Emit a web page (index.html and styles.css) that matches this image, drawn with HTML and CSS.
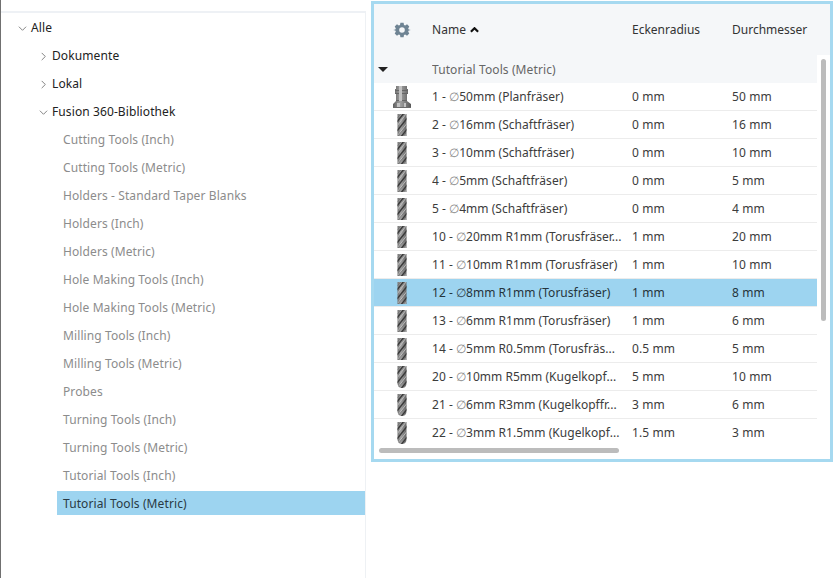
FILE: index.html
```html
<!DOCTYPE html>
<html>
<head>
  <title>Werkzeugbibliothek</title>
  <link rel="stylesheet" href="styles.css">
</head>
<body>

  <!-- shared tool thumbnails -->
  <svg class="defs" width="0" height="0">
    <defs>
      <linearGradient id="steel" x1="0" x2="1" y1="0" y2="0">
        <stop offset="0" stop-color="#5f5f5f"/>
        <stop offset="0.4" stop-color="#a0a0a0"/>
        <stop offset="1" stop-color="#575757"/>
      </linearGradient>
      <symbol id="flutes" viewBox="0 0 12 24">
        <g fill="none" stroke-width="1">
          <path d="M1 9l7-9M1 18l11-14M4 25l8-10" stroke="#3a3a3a" stroke-width="1.400"/>
          <path d="M1 13l9-12M2 22l10-13M8 24l4-5" stroke="#c9c9c9" stroke-width=".8"/>
          <path d="M1 5l4-4M1 24l11-13" stroke="#6d6d6d" stroke-width=".6"/>
        </g>
      </symbol>
      <clipPath id="mill-clip"><path d="M1.500 1h9v22h-9z"/></clipPath>
      <clipPath id="ball-clip"><path d="M1.500 1h9v17c0 3-1.500 5-4.500 5s-4.500-2-4.500-5z"/></clipPath>
      <symbol id="mill" viewBox="0 0 12 24">
        <g clip-path="url(#mill-clip)">
          <path d="M0 0h12v24H0z" fill="url(#steel)"/>
          <use href="#flutes" width="12" height="24"/>
        </g>
      </symbol>
      <symbol id="ball" viewBox="0 0 12 24">
        <g clip-path="url(#ball-clip)">
          <path d="M0 0h12v24H0z" fill="url(#steel)"/>
          <use href="#flutes" width="12" height="24"/>
        </g>
      </symbol>
      <symbol id="face" viewBox="0 0 20 24">
        <path d="M4 1h11v3h1v5h-1v7l4 3v4H1v-4l3-3V9H3V4h1z" fill="url(#steel)"/>
        <path d="M3 5h13v1H3zM3 8h13v1H3zM4 15h11v1H4z" fill="#666"/>
        <path d="M7 1h3v15H7zM5 18h3v5H5zM12 18h2v5h-2z" fill="#c2c2c2"/>
        <path d="M1 22h18v1H1z" fill="#6a6a6a"/>
      </symbol>
    </defs>
  </svg>

  <div class="app">

    <div class="tree-pane">
      <ul class="tree">
        <li class="node"><svg class="chev" viewBox="0 0 10 10"><path d="M1 3l4 4 4-4"/></svg>Alle</li>
        <li class="node lvl-1"><svg class="chev" viewBox="0 0 10 10"><path d="M3 1l4 4-4 4"/></svg>Dokumente</li>
        <li class="node lvl-1"><svg class="chev" viewBox="0 0 10 10"><path d="M3 1l4 4-4 4"/></svg>Lokal</li>
        <li class="node lvl-1"><svg class="chev" viewBox="0 0 10 10"><path d="M1 3l4 4 4-4"/></svg>Fusion 360-Bibliothek</li>
        <li class="leaf">Cutting Tools (Inch)</li>
        <li class="leaf">Cutting Tools (Metric)</li>
        <li class="leaf">Holders - Standard Taper Blanks</li>
        <li class="leaf">Holders (Inch)</li>
        <li class="leaf">Holders (Metric)</li>
        <li class="leaf">Hole Making Tools (Inch)</li>
        <li class="leaf">Hole Making Tools (Metric)</li>
        <li class="leaf">Milling Tools (Inch)</li>
        <li class="leaf">Milling Tools (Metric)</li>
        <li class="leaf">Probes</li>
        <li class="leaf">Turning Tools (Inch)</li>
        <li class="leaf">Turning Tools (Metric)</li>
        <li class="leaf">Tutorial Tools (Inch)</li>
        <li class="leaf selected">Tutorial Tools (Metric)</li>
      </ul>
    </div>

    <div class="table-panel">
      <div class="row head">
        <span class="thumb">
          <svg class="gear" viewBox="0 0 20 20"><path fill-rule="evenodd" d="M8 1h4l.5 2.600 1.500.7 2.300-1.400 2.800 2.800-1.400 2.300.7 1.500 2.600.5v0l-2.600.5-.7 1.500 1.400 2.300-2.800 2.800-2.300-1.400-1.500.7L12 19H8l-.5-2.600-1.500-.7-2.300 1.400-2.800-2.800 1.400-2.300-.7-1.500L-1 10v0l2.600-.5.7-1.500-1.400-2.300 2.800-2.800L6 4.300l1.500-.7zM10 6.500a3.500 3.500 0 1 0 0 7 3.500 3.500 0 0 0 0-7z"/></svg>
        </span>
        <span class="name">Name <svg class="sort" viewBox="0 0 10 6"><path d="M1 5l4-4 4 4"/></svg></span>
        <span>Eckenradius</span>
        <span>Durchmesser</span>
      </div>

      <div class="row group">
        <span class="thumb"><i class="caret"></i></span>
        <span class="name">Tutorial Tools (Metric)</span>
      </div>

      <div class="row"><span class="thumb"><svg class="tool wide"><use href="#face"/></svg></span><span class="name">1 - <i>∅</i>50mm (Planfräser)</span><span>0 mm</span><span>50 mm</span></div>
      <div class="row"><span class="thumb"><svg class="tool"><use href="#mill"/></svg></span><span class="name">2 - <i>∅</i>16mm (Schaftfräser)</span><span>0 mm</span><span>16 mm</span></div>
      <div class="row"><span class="thumb"><svg class="tool"><use href="#mill"/></svg></span><span class="name">3 - <i>∅</i>10mm (Schaftfräser)</span><span>0 mm</span><span>10 mm</span></div>
      <div class="row"><span class="thumb"><svg class="tool"><use href="#mill"/></svg></span><span class="name">4 - <i>∅</i>5mm (Schaftfräser)</span><span>0 mm</span><span>5 mm</span></div>
      <div class="row"><span class="thumb"><svg class="tool"><use href="#mill"/></svg></span><span class="name">5 - <i>∅</i>4mm (Schaftfräser)</span><span>0 mm</span><span>4 mm</span></div>
      <div class="row"><span class="thumb"><svg class="tool"><use href="#mill"/></svg></span><span class="name">10 - <i>∅</i>20mm R1mm (Torusfräser...</span><span>1 mm</span><span>20 mm</span></div>
      <div class="row"><span class="thumb"><svg class="tool"><use href="#mill"/></svg></span><span class="name">11 - <i>∅</i>10mm R1mm (Torusfräser)</span><span>1 mm</span><span>10 mm</span></div>
      <div class="row current"><span class="thumb"><svg class="tool"><use href="#mill"/></svg></span><span class="name">12 - <i>∅</i>8mm R1mm (Torusfräser)</span><span>1 mm</span><span>8 mm</span></div>
      <div class="row"><span class="thumb"><svg class="tool"><use href="#mill"/></svg></span><span class="name">13 - <i>∅</i>6mm R1mm (Torusfräser)</span><span>1 mm</span><span>6 mm</span></div>
      <div class="row"><span class="thumb"><svg class="tool"><use href="#mill"/></svg></span><span class="name">14 - <i>∅</i>5mm R0.5mm (Torusfräs...</span><span>0.5 mm</span><span>5 mm</span></div>
      <div class="row"><span class="thumb"><svg class="tool"><use href="#ball"/></svg></span><span class="name">20 - <i>∅</i>10mm R5mm (Kugelkopf...</span><span>5 mm</span><span>10 mm</span></div>
      <div class="row"><span class="thumb"><svg class="tool"><use href="#ball"/></svg></span><span class="name">21 - <i>∅</i>6mm R3mm (Kugelkopffr...</span><span>3 mm</span><span>6 mm</span></div>
      <div class="row last"><span class="thumb"><svg class="tool"><use href="#ball"/></svg></span><span class="name">22 - <i>∅</i>3mm R1.5mm (Kugelkopf...</span><span>1.5 mm</span><span>3 mm</span></div>

      <div class="scroll-y"></div>
      <div class="scroll-x"></div>
    </div>

  </div>

</body>
</html>
```

FILE: styles.css
```css
:root {
  --select: #9dd4f0;
  --line: #ececec;
  --head-bg: #f5f7f9;
  --text: #3c3c3c;
}

body {
  margin: 0;
  background: #fff;
  font-family: 'Noto Sans', sans-serif;
  font-size: 12px;
  letter-spacing: 0.1px;
  color: var(--text);
}

.defs { position: absolute; }

.app {
  display: flex;
  height: 578px;
  width: 836px;
  overflow: hidden;
  box-sizing: border-box;
  border-left: 1px solid #707070;
}

/* Left tree */
.tree-pane {
  width: 365px;
  flex: none;
  box-sizing: border-box;
  margin-top: 11px;
  border-top: 2px solid #eef1f5;
  border-right: 1px solid #eef1f4;
  padding-top: 1px;
}

.tree {
  list-style: none;
  margin: 0;
  padding: 0;
}

.node, .leaf {
  height: 28px;
  line-height: 28px;
  white-space: nowrap;
}

.node {
  display: flex;
  align-items: center;
  padding-left: 17px;
  color: #222;
}

.lvl-1 { padding-left: 38px; }

.chev {
  width: 9px;
  height: 9px;
  margin-right: 4px;
  fill: none;
  stroke: #777;
  stroke-width: 1;
}

.leaf {
  margin-left: 56px;
  padding-left: 6px;
  color: #8c8c8c;
}

.leaf.selected {
  height: 24px;
  line-height: 26px;
  margin-top: 1px;
  background: var(--select);
  color: #2a3a44;
}

/* Right table */
.table-panel {
  position: relative;
  width: 462px;
  height: 461px;
  flex: none;
  box-sizing: border-box;
  margin: 1px 0 0 5px;
  padding-right: 13px;
  border: 3px solid #a6d9f0;
  overflow: hidden;
}

.row {
  display: grid;
  grid-template-columns: 58px 200px 100px 84px;
  align-items: center;
  height: 28px;
  box-sizing: border-box;
  border-bottom: 1px solid var(--line);
}

.row span {
  white-space: nowrap;
  overflow: hidden;
}

.row .name { letter-spacing: 0.03px; }

.name i {
  font-style: normal;
  color: #8a8a8a;
}

.head {
  height: 51px;
  margin-right: -13px;
  padding-right: 13px;
  background: var(--head-bg);
  border-bottom: 0;
  color: #333;
  letter-spacing: 0;
}

.group {
  background: var(--head-bg);
  color: #666;
  border-bottom: 0;
}

.group .name { letter-spacing: 0.1px; }

.current {
  background: var(--select);
  color: #26343c;
}

.current .name i { color: #33454f; }

.last { border-bottom-color: transparent; }

.thumb {
  display: flex;
  align-items: center;
  justify-content: center;
  height: 100%;
  padding-right: 3px;
  box-sizing: border-box;
}

.group .thumb {
  justify-content: flex-start;
  padding: 0 0 0 4px;
}

.caret {
  width: 0;
  height: 0;
  border-left: 5px solid transparent;
  border-right: 5px solid transparent;
  border-top: 5px solid #222;
}

.gear {
  width: 16px;
  height: 16px;
  fill: #6f8494;
  overflow: visible;
}

.sort {
  width: 9px;
  height: 6px;
  margin-left: 1px;
  fill: none;
  stroke: #111;
  stroke-width: 2.4;
  vertical-align: 1px;
}

.tool {
  width: 12px;
  height: 24px;
}

.tool.wide { width: 20px; }

/* Overlay scrollbars */
.scroll-y {
  position: absolute;
  top: 55px;
  right: 4px;
  width: 5px;
  height: 262px;
  border-radius: 3px;
  background: #bcbcbc;
}

.scroll-x {
  position: absolute;
  left: 5px;
  top: 444px;
  width: 240px;
  height: 5px;
  border-radius: 3px;
  background: #bcbcbc;
}
```
